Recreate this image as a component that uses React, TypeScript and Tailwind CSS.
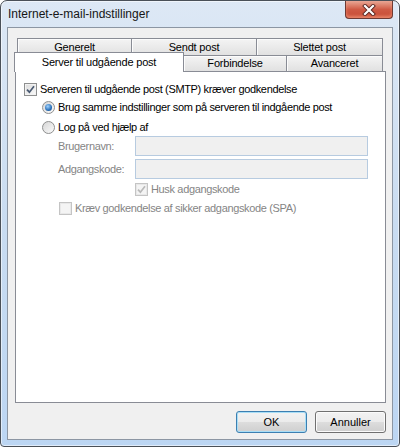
import React from "react";

const Check = ({ color }: { color: string }) => (
  <svg width="9" height="9" viewBox="0 0 9 9">
    <path d="M1 4.6 L3.4 7.2 L8 1.2" fill="none" stroke={color} strokeWidth="1.7" />
  </svg>
);

const Checkbox = ({ checked, disabled }: { checked?: boolean; disabled?: boolean }) => (
  <span
    className={`flex h-[13px] w-[13px] shrink-0 items-center justify-center border ${
      disabled
        ? "border-[#c4c4c4] bg-[#f4f4f4] shadow-[inset_0_0_0_1px_#e8e8e8]"
        : "border-[#8e8f8f] bg-gradient-to-br from-[#dadada] to-[#fbfbfb] shadow-[inset_0_0_0_1px_#f2f2f2]"
    }`}
  >
    {checked && <Check color={disabled ? "#b9b9b9" : "#4a5a72"} />}
  </span>
);

const Radio = ({ checked }: { checked?: boolean }) => (
  <span className="flex h-[13px] w-[13px] shrink-0 items-center justify-center rounded-full border border-[#8e8f8f] bg-gradient-to-br from-[#d6d6d6] to-[#fbfbfb]">
    {checked && (
      <span className="h-[7px] w-[7px] rounded-full bg-[radial-gradient(circle_at_40%_35%,#9fd3ff,#2a6fb8_60%,#143f74)]" />
    )}
  </span>
);

const Tab = ({ label, w, first }: { label: string; w: string; first?: boolean }) => (
  <div
    className={`flex h-full items-center justify-center border border-b-0 border-[#898c95] bg-gradient-to-b from-[#f4f4f4] to-[#e1e1e1] shadow-[inset_1px_1px_0_#fcfcfc] ${w} ${
      first ? "" : "-ml-px"
    }`}
  >
    {label}
  </div>
);

export default function App() {
  return (
    <div className="relative flex h-[447px] w-[400px] flex-col overflow-hidden rounded-t-[7px] rounded-b-[4px] border border-[#4a5058] bg-gradient-to-b from-[#dde8f5] via-[#c9dcf1] to-[#bcd6f3] font-['Liberation_Sans',Arial,sans-serif] text-[11px] text-black shadow-[inset_0_0_0_1px_rgba(255,255,255,0.55)]">
      {/* Title bar */}
      <div className="flex h-[26px] shrink-0 items-center pl-[7px] text-[12px] text-[#151515]">
        Internet-e-mail-indstillinger
      </div>
      <div className="absolute right-[6px] top-0 flex h-[18px] w-[48px] items-center justify-center rounded-b-[4px] border border-t-0 border-[#6e3a33] bg-gradient-to-b from-[#e8a795] via-[#cf5a44] to-[#c54a33] shadow-[inset_0_-2px_3px_rgba(255,170,140,0.6)]">
        <svg width="14" height="12" viewBox="0 0 14 12">
          <path d="M3 2 L11 10 M11 2 L3 10" stroke="#5a2620" strokeWidth="4" strokeLinecap="square" />
          <path d="M3 2 L11 10 M11 2 L3 10" stroke="#ffffff" strokeWidth="2.2" strokeLinecap="square" />
        </svg>
      </div>

      {/* Client area */}
      <div className="mx-[6px] mb-[6px] flex-1 border border-[#8c96a3] bg-[#f0f0f0]">
        <div className="ml-[7px] mt-[10px] w-[371px]">
          {/* Tab rows */}
          <div className="ml-[2px] flex h-[17px] tracking-[-0.2px]">
            <Tab label="Generelt" w="w-[115px]" first />
            <Tab label="Sendt post" w="w-[126px]" />
            <Tab label="Slettet post" w="w-[127px]" />
          </div>
          <div className="ml-[2px] flex h-[16px] tracking-[-0.2px]">
            <div className="relative z-10 -ml-[3px] -mt-[3px] flex h-[20px] w-[170px] shrink-0 items-center justify-center border border-b-0 border-[#898c95] bg-white pb-[1px]">
              Server til udgående post
            </div>
            <Tab label="Forbindelse" w="w-[104px]" />
            <Tab label="Avanceret" w="w-[97px]" />
          </div>

          {/* Panel */}
          <div className="h-[332px] border border-[#898c95] bg-white tracking-[-0.35px]">
            <div className="ml-[8px] mt-[11px] flex h-[13px] items-center gap-[3px]">
              <Checkbox checked />
              <span>Serveren til udgående post (SMTP) kræver godkendelse</span>
            </div>
            <div className="ml-[26px] mt-[5px] flex h-[13px] items-center gap-[3px]">
              <Radio checked />
              <span>Brug samme indstillinger som på serveren til indgående post</span>
            </div>
            <div className="ml-[26px] mt-[7px] flex h-[13px] items-center gap-[3px]">
              <Radio />
              <span>Log på ved hjælp af</span>
            </div>
            <div className="ml-[42px] mt-[2px] flex h-[20px] items-center text-[#858585]">
              <span className="w-[77px]">Brugernavn:</span>
              <div className="h-[20px] w-[233px] border border-[#b7cbe0] bg-[#f0f0f0]" />
            </div>
            <div className="ml-[42px] mt-[3px] flex h-[20px] items-center text-[#858585]">
              <span className="w-[77px]">Adgangskode:</span>
              <div className="h-[20px] w-[233px] border border-[#b7cbe0] bg-[#f0f0f0]" />
            </div>
            <div className="ml-[119px] mt-[4px] flex h-[13px] items-center gap-[3px] text-[#858585]">
              <Checkbox checked disabled />
              <span>Husk adgangskode</span>
            </div>
            <div className="ml-[43px] mt-[6px] flex h-[13px] items-center gap-[3px] text-[#858585]">
              <Checkbox disabled />
              <span>Kræv godkendelse af sikker adgangskode (SPA)</span>
            </div>
          </div>

          {/* Buttons */}
          <div className="mt-[8px] flex justify-end gap-[8px]">
            <button className="flex h-[22px] w-[71px] items-center justify-center rounded-[3px] border border-[#3c7fb1] bg-[linear-gradient(#f2f2f2,#ebebeb_50%,#dddddd_50%,#cfcfcf)] shadow-[inset_0_0_0_1px_#a9def6]">
              OK
            </button>
            <button className="flex h-[22px] w-[71px] items-center justify-center rounded-[3px] border border-[#707070] bg-[linear-gradient(#f2f2f2,#ebebeb_50%,#dddddd_50%,#cfcfcf)] shadow-[inset_0_0_0_1px_#fbfbfb]">
              Annuller
            </button>
          </div>
        </div>
      </div>
    </div>
  );
}
